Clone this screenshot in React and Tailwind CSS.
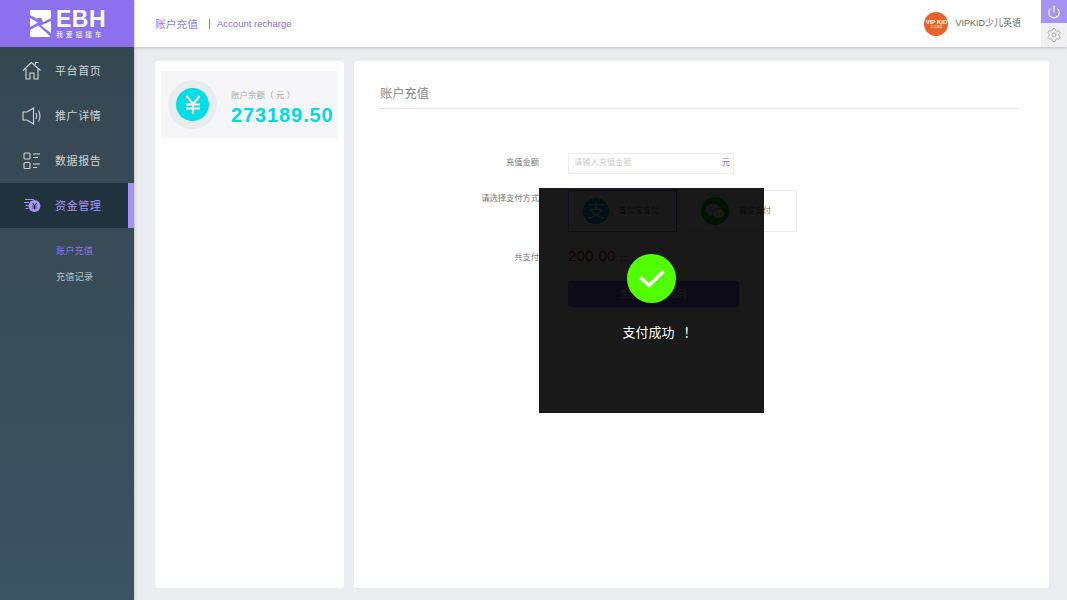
import { Settings, Power } from 'lucide-react'

const cjk = '"Liberation Sans", "Noto Sans CJK SC", sans-serif'

function Logo() {
  return (
    <div className="h-[47px] bg-[#8b71ee] flex items-center pl-[30px] gap-[5px] shrink-0">
      <svg width="21" height="27" viewBox="0 0 21 27">
        <path d="M1 0 H20 Q21 0 21 1 V8 L13.5 12 L0 5 V1 Q0 0 1 0Z" fill="#fff" />
        <path d="M0 8 L8 12.5 L0 17Z" fill="#fff" />
        <path d="M21 11 V23 L11 15.5Z" fill="#fff" />
        <path d="M0 20 L8 15.5 L20 26 Q20 27 19 27 H1 Q0 27 0 26Z" fill="#fff" />
        <circle cx="9.5" cy="10.5" r="2.8" fill="#8b71ee" />
      </svg>
      <div className="flex flex-col text-white leading-none pt-[1px]">
        <span className="text-[23px] h-[18px] leading-[18px] tracking-[0.5px] font-bold">EBH</span>
        <span className="text-[7px] leading-[8px] mt-[3px] tracking-[2.7px] whitespace-nowrap">我爱摇摇车</span>
      </div>
    </div>
  )
}

function HomeIcon() {
  return (
    <svg width="20" height="19" viewBox="0 0 20 19" fill="none" stroke="#d4d7d9" strokeWidth="1.1">
      <path d="M1 9.5 L9.5 1.5 L18.5 9.5" />
      <path d="M13.5 3.5 V1.5 H16.5" />
      <path d="M4 8 V18 H8 V12 H12 V18 H16 V8" />
    </svg>
  )
}

function SpeakerIcon() {
  return (
    <svg width="20" height="18" viewBox="0 0 20 18" fill="none" stroke="#d4d7d9" strokeWidth="1.1">
      <path d="M1 5 H5 L11.5 1 V17 L5 13 H1Z" />
      <path d="M14 6 Q15.5 9 14 12" />
      <path d="M16.5 3.5 Q19.5 9 16.5 14.5" />
    </svg>
  )
}

function ReportIcon() {
  return (
    <svg width="18" height="18" viewBox="0 0 18 18" fill="none" stroke="#d4d7d9" strokeWidth="1.1">
      <rect x="1" y="1" width="6" height="6" rx="1" />
      <rect x="1" y="10.5" width="6" height="6" rx="1" />
      <path d="M10 2h7M10 5.5h5M10 12h7M10 15.5h4" />
    </svg>
  )
}

function MoneyIcon() {
  return (
    <svg width="17" height="15" viewBox="0 0 17 15" fill="none">
      <path d="M1 1.5h9M0 4.5h5M1.5 7.5h3.5M1.5 10.5h3" stroke="#a892f5" strokeWidth="1.1" />
      <circle cx="10.5" cy="8" r="6" fill="#a892f5" />
      <path d="M8.5 5l2 2.5 2-2.5M8.5 8h4M8.5 10h4M10.5 7.5v4" stroke="#1f313c" strokeWidth="1" />
    </svg>
  )
}

function NavItem({ icon, label, active }) {
  if (active) {
    return (
      <div className="h-[45px] bg-[#20323e] flex items-center relative">
        <span className="w-[55px] flex justify-center pl-[9px]">{icon}</span>
        <span className="text-[11px] pt-[1px] text-[#a892f5] tracking-[0.6px]">{label}</span>
        <span className="absolute right-0 top-0 bottom-0 w-[6px] bg-[#a592f3]" />
      </div>
    )
  }
  return (
    <div className="h-[45px] flex items-center">
      <span className="w-[55px] flex justify-center pl-[9px]">{icon}</span>
      <span className="text-[11px] pt-[1px] text-[#d0d4d6] tracking-[0.6px]">{label}</span>
    </div>
  )
}

function Sidebar() {
  return (
    <aside className="w-[134px] shrink-0 flex flex-col bg-gradient-to-b from-[#354650] to-[#3c5361] shadow-[1px_0_3px_rgba(0,0,0,0.15)] z-10">
      <Logo />
      <nav className="flex flex-col pt-[1px]">
        <NavItem icon={<HomeIcon />} label="平台首页" />
        <NavItem icon={<SpeakerIcon />} label="推广详情" />
        <NavItem icon={<ReportIcon />} label="数据报告" />
        <NavItem icon={<MoneyIcon />} label="资金管理" active />
      </nav>
      <div className="pl-[56px] pt-[16px] flex flex-col gap-[11px] text-[9.25px] leading-[15px]">
        <span className="text-[#8a72ee]">账户充值</span>
        <span className="text-[#b9bfc3]">充值记录</span>
      </div>
    </aside>
  )
}

function Header() {
  return (
    <header className="h-[47px] bg-white shrink-0 flex items-center shadow-[0_1px_3px_rgba(0,0,0,0.2)] relative">
      <div className="pl-[21px] pt-[1px] flex items-center flex-1">
        <span className="text-[10.75px] text-[#8f7cf0]">账户充值</span>
        <span className="ml-[11px] h-[10px] w-px bg-[#7f6fe8]" />
        <span className="ml-[7px] text-[9.5px] text-[#7f6fe8]">Account recharge</span>
      </div>
      <div className="w-[24px] h-[24px] rounded-full bg-[#e8622c] flex flex-col items-center justify-center text-white leading-none mr-[7px]">
        <span className="text-[6px] font-bold">VIP KID</span>
        <span className="text-[3px] mt-[1px]">少儿英语</span>
      </div>
      <span className="mr-[20px] text-[9px] text-[#666]">VIPKID少儿英语</span>
      <div className="w-[26px] h-[47px] flex flex-col">
        <div className="h-[23px] bg-[#a592f3] flex items-center justify-center">
          <Power size={14} color="#fff" strokeWidth={2} />
        </div>
        <div className="h-[24px] bg-[#f0f0f2] flex items-center justify-center">
          <Settings size={16} color="#8f8f8f" strokeWidth={1} />
        </div>
      </div>
    </header>
  )
}

function BalanceCard() {
  return (
    <section className="w-[189px] shrink-0 bg-white rounded-[3px] p-[6px] pt-[10px]">
      <div className="h-[67px] w-[177px] bg-[#f6f6f8] flex items-center pl-[7px]">
        <div className="w-[49px] h-[49px] rounded-full bg-[#e9ecef] flex items-center justify-center shrink-0">
          <div className="w-[33px] h-[33px] rounded-full bg-[#00dde6] flex items-center justify-center">
            <svg width="18" height="19" viewBox="0 0 18 19" fill="none" stroke="#fff" strokeWidth="2.2">
              <path d="M2.5 1 L9 9 L15.5 1" />
              <path d="M2 9.5 H16 M2 13.5 H16 M9 9 V19" />
            </svg>
          </div>
        </div>
        <div className="ml-[14px] flex flex-col pt-[6px]">
          <span className="text-[8.5px] text-[#aaa] leading-[12px]">账户余额（ 元 ）</span>
          <span className="text-[20px] leading-[24px] mt-[2px] font-bold tracking-[0.9px] text-[#00d9e2]">273189.50</span>
        </div>
      </div>
    </section>
  )
}

function RechargeForm() {
  return (
    <section className="flex-1 bg-white rounded-[3px] px-[25px] text-[8.25px] text-[#777]">
      <div className="h-[48px] mr-[4px] -ml-[1px] pl-[2px] border-b border-[#e5e5e5] flex items-end pb-[5px] text-[12.25px] text-[#888]">账户充值</div>
      <div className="flex items-center mt-[44px] h-[21px]">
        <span className="w-[160px] text-right">充值金额</span>
        <div className="ml-[29px] w-[166px] h-[21px] border border-[#ececec] flex items-center justify-between pl-[5px] pr-[3px] text-[#ccc]">
          请输入充值金额
          <span className="text-[#8a72ee]">元</span>
        </div>
      </div>
      <div className="flex mt-[16px]">
        <span className="w-[160px] text-right pt-[3px]">请选择支付方式</span>
        <div className="ml-[29px] w-[229px] h-[42px] flex items-center border border-[#ececec] text-[8px]">
          <div className="w-[109px] -m-px h-[42px] border border-[#8b71ee] flex items-center pl-[14px] gap-[10px]">
            <span className="w-[26px] h-[26px] rounded-full bg-[#00a1e9] flex items-center justify-center text-white text-[18px] leading-none">支</span>
            支付宝支付
          </div>
          <span className="ml-[11px] w-px h-[36px] bg-[#f2f2f2]" />
          <div className="flex items-center pl-[13px] gap-[10px]">
            <span className="w-[28px] h-[28px] rounded-full bg-[#09bb07] flex items-center justify-center">
              <svg width="20" height="17" viewBox="0 0 20 17" fill="#fff">
                <ellipse cx="8" cy="6.5" rx="7.5" ry="6" />
                <path d="M3 10.5 L3 14 L6.5 12Z" />
                <ellipse cx="13.5" cy="10.5" rx="6" ry="5" stroke="#09bb07" strokeWidth="0.8" />
              </svg>
            </span>
            微信支付
          </div>
        </div>
      </div>
      <div className="flex items-center mt-[15px] h-[22px]">
        <span className="w-[160px] text-right pt-[1px]">共支付</span>
        <span className="ml-[29px] -mt-[4px] text-[15px] tracking-[0.3px] text-[#e60012]">200.00</span>
        <span className="ml-[4px] text-[#999]">元</span>
      </div>
      <div className="ml-[189px] mt-[12px] w-[171px] h-[26px] rounded-[3px] bg-[#8b71ee] text-white text-[9.5px] flex items-center justify-center">生成支付二维码</div>
    </section>
  )
}

function SuccessModal() {
  return (
    <div className="absolute left-[539px] top-[188px] w-[225px] h-[225px] bg-black/90 flex flex-col items-center pt-[66px] z-20">
      <div className="w-[49px] h-[49px] rounded-full bg-[#52ff00] flex items-center justify-center">
        <svg width="26" height="20" viewBox="0 0 26 20" fill="none">
          <path d="M2.5 9.5 L10 16.5 L23.5 3.5" stroke="#fff" strokeWidth="3.6" strokeLinecap="round" strokeLinejoin="round" />
        </svg>
      </div>
      <span className="mt-[20px] ml-[16px] text-[13px] leading-[20px] text-white">支付成功<span className="ml-[9px]">！</span></span>
    </div>
  )
}

export default function App() {
  return (
    <div className="w-[1067px] h-[600px] flex overflow-hidden relative bg-[#ebecf0]" style={{ fontFamily: cjk }}>
      <Sidebar />
      <div className="flex-1 flex flex-col min-w-0">
        <Header />
        <main className="flex-1 flex gap-[10px] pl-[21px] pr-[18px] pt-[14px] pb-[12px] min-h-0">
          <BalanceCard />
          <RechargeForm />
        </main>
      </div>
      <SuccessModal />
    </div>
  )
}
